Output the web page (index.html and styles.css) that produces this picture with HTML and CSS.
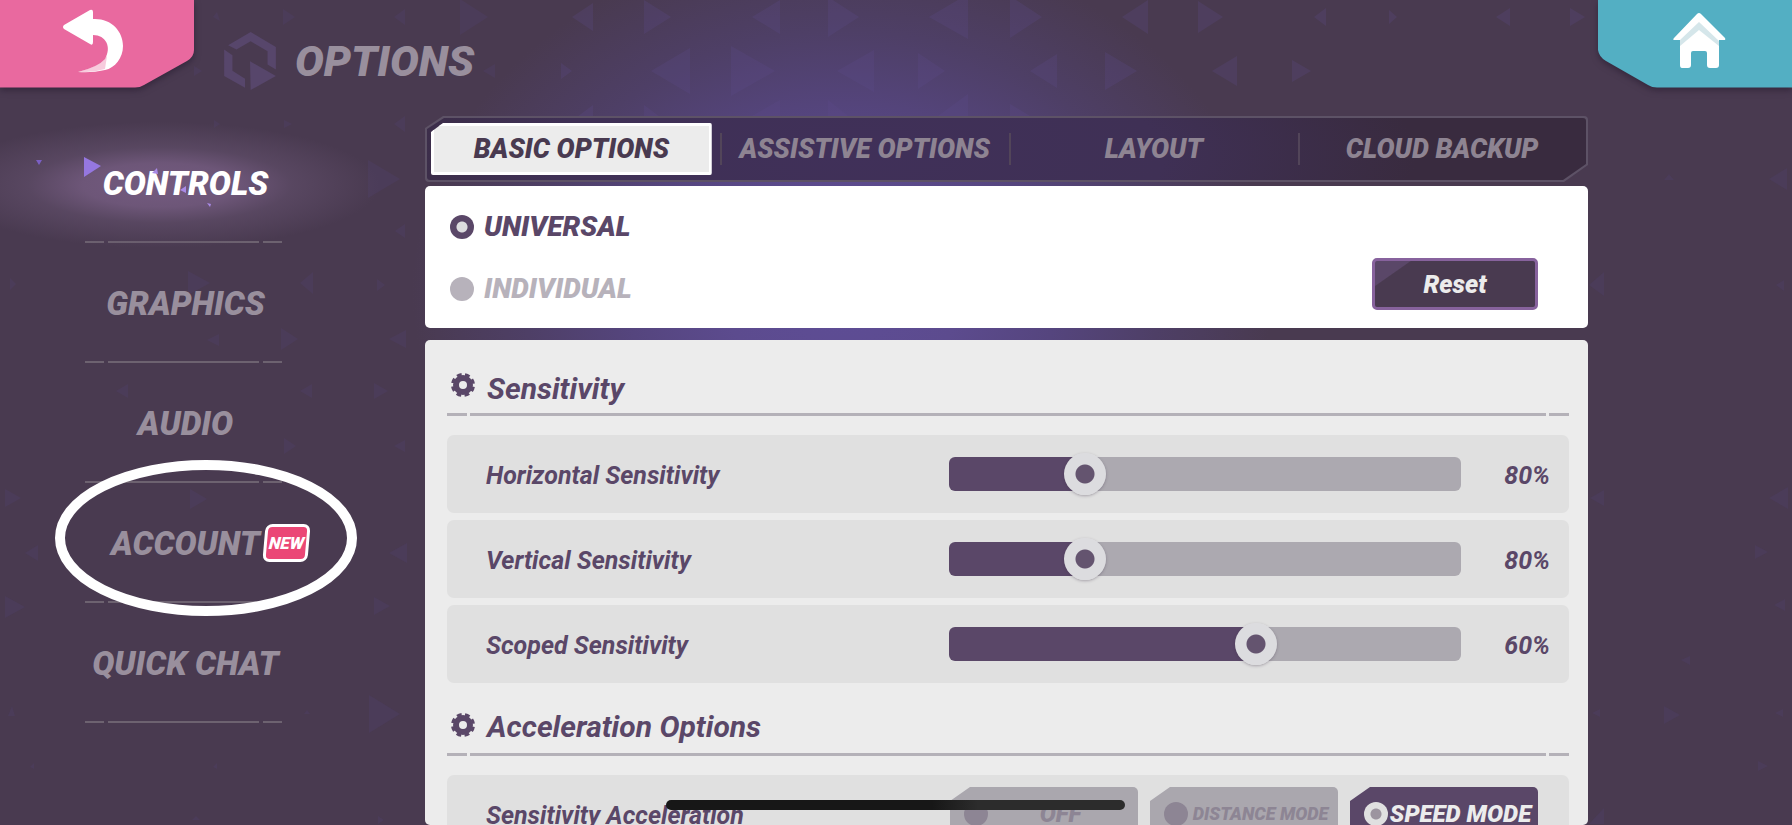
FILE: index.html
```html
<!DOCTYPE html>
<html lang="en">
<head>
<meta charset="utf-8">
<meta name="viewport" content="width=device-width, initial-scale=1">
<title>Options</title>
<link rel="stylesheet" href="styles.css">
</head>
<body>
<svg class="pattern" viewBox="0 0 1792 825" preserveAspectRatio="xMidYMid slice" aria-hidden="true">
  <g class="pattern-bright">
    <path d="M593 3v28l-21-14zM644 0v34l27-17zM780 0v34l-28-17zM828 -3v40l31-20zM968 -6v45l-39-22zM1010 -4v42l32-21zM1148 0v34l-26-17zM1198 1v32l25-16zM1326 8v18l-12-9zM1389 10v14l8-7zM1510 8v18l-14-9zM1570 8v18l15-9z"/>
    <path d="M561 63v16l11-8zM690 48v46l-39-23zM731 46v50l44-25zM874 50v42l-37-21zM918 53v36l27-18zM1057 54v34l-27-17zM1105 52v38l32-19zM1237 56v30l-25-15zM1292 60v22l19-11zM1656 62v18l-26-9z"/>
    <path d="M593 105v12h-16zM644 105v12h16zM780 100v16h-28zM828 100v16h20zM968 94v22h-30zM1010 104v12h20z"/>
  </g>
  <g class="pattern-dim">
    <path d="M283 9v16l12-8zM405 9v16l-11-8zM460 -1v36l28-18zM213 17l4-5 3 9zM405 116v16l-11-8zM284 120v8l8-4zM214 120v8l6-4zM194 66v10l8-5zM495 64v14l-12-7z"/>
    <path d="M368 160v38l32-19zM405 224v14l-10-7zM188 271v24l22-12zM313 272v22l-13-11zM377 279v12l8-6zM10 278v12l6-6zM219 334v12l-12-6zM281 328v22l17-11zM406 330v18l-17-9zM128 384v14l-12-7zM312 384v14l-12-7zM374 383v16l14-8z"/>
    <path d="M284 438v16l12-8zM405 440v12l-11-6zM5 489v18l16-9zM190 489v20l17-10zM38 545v16l-13-8zM407 543v20l-18-10zM5 596v22l20-11zM374 597v18l16-9zM369 695v38l31-19zM8 716l4-10 3 10zM304 714h6l-3-4zM30 767l4-4v6zM213 767l4-4v6zM192 820l4-4 4 4zM378 816v8l6-4z"/>
    <path d="M1787 168v22l-18-11zM1664 180l5-6 5 6zM1604 272v24l-15-11zM1784 280v11l-8-6zM1604 490v16l-14-8zM1788 487v22l-19-11zM1755 545v14l13-7zM1785 599v12l-11-6zM1690 656v9l-9-5zM1664 706v18l16-9zM1600 709v8l-8-4zM1783 709v8l-8-4zM1758 761v10l10-5zM1604 808v16h-15z"/>
  </g>
</svg>

<div class="screen">
  <header class="topbar">
    <button class="corner" type="button" aria-label="Back">
      <svg viewBox="0 0 194 88" width="194" height="88" aria-hidden="true">
        <path fill="#e9699f" d="M0 0H194V50Q194 57 187 61L144 85Q140 87.500 135 87.500H0Z"/>
        <path fill="#fff" d="M64 25L90 10Q93 9 93 12V19C111 18 123 31 123 46C123 58 115 68 105 70Q92 73 78 72Q98 67 105 59C112 47 106 35 93 35V42Q93 46 90 44L64 29Q62 27 64 25Z"/>
        <path fill="#e9699f" opacity=".35" d="M78 72Q98 67 107 56L105 69Q92 73 78 72Z"/>
      </svg>
    </button>
    <div class="brand">
      <svg class="brand-mark" viewBox="672 95 156 175" width="52" height="58" aria-hidden="true">
        <path d="M684 135L752 95L828 140V208L803 193V153L752 123L709 148ZM672 148L697 165V212L735 236V263L672 228ZM750 183L828 228L752 270Z"/>
      </svg>
      <h1>OPTIONS</h1>
    </div>
    <button class="corner" type="button" aria-label="Home">
      <svg viewBox="0 0 194 88" width="194" height="88" aria-hidden="true">
        <path fill="#53afc3" d="M0 0V50Q1 57 8 61L50 85Q54 87.500 59 87.500H194V0Z"/>
        <path fill="#fff" d="M99 14Q101 12 103 14L127 38Q128 40 126 40H121V65Q121 68 118 68H112Q109 68 109 65V53Q109 51 107 51H95Q93 51 93 53V65Q93 68 90 68H84Q82 68 82 65V40H77Q74 40 76 38Z"/>
        <path fill="#d5e6ea" d="M82 40L101 22L121 41V46L101 30L82 46Z"/>
      </svg>
    </button>
  </header>

  <div class="content">
    <nav class="side" aria-label="Option groups">
      <ul>
        <li class="current"><a href="#controls" aria-current="page">CONTROLS</a>
          <svg class="sparks" viewBox="0 0 180 54" width="180" height="54" aria-hidden="true">
            <path fill="#9577e0" d="M48 2V22L65 11Z"/><path fill="#7b5fc4" d="M0 5H6L3 10Z"/><path fill="#a98ae6" d="M116 18L121 13L122 19ZM144 35L150 31V38ZM171 48L175 49L174 52Z"/>
          </svg>
        </li>
        <li><a href="#graphics">GRAPHICS</a></li>
        <li><a href="#audio">AUDIO</a></li>
        <li><a href="#account">ACCOUNT</a><span class="badge"><span>NEW</span></span>
          <svg class="ring" viewBox="0 0 304 156" width="304" height="156" aria-hidden="true"><ellipse cx="152" cy="78" rx="146" ry="73"/></svg>
        </li>
        <li><a href="#quick-chat">QUICK CHAT</a></li>
      </ul>
    </nav>

    <main>
      <div class="tabs-frame">
        <div class="tabs" role="tablist">
          <button type="button" role="tab" aria-selected="true">BASIC OPTIONS</button>
          <button type="button" role="tab" aria-selected="false">ASSISTIVE OPTIONS</button>
          <button type="button" role="tab" aria-selected="false">LAYOUT</button>
          <button type="button" role="tab" aria-selected="false">CLOUD BACKUP</button>
        </div>
      </div>

      <section class="scope">
        <div class="scope-list">
          <label><input type="radio" name="scope" checked>UNIVERSAL</label>
          <label><input type="radio" name="scope">INDIVIDUAL</label>
        </div>
        <button class="reset" type="button">Reset</button>
      </section>

      <section class="settings">
        <h2><svg class="gear" viewBox="0 0 26 26" width="26" height="26" aria-hidden="true"><circle class="gear-body" cx="13" cy="13" r="7"/><circle class="gear-teeth" cx="13" cy="13" r="10"/></svg>Sensitivity</h2>
        <div class="row">
          <label for="horizontal">Horizontal Sensitivity</label>
          <input id="horizontal" type="range" min="0" max="1000" value="244" style="--at:.244">
          <output for="horizontal">80%</output>
        </div>
        <div class="row">
          <label for="vertical">Vertical Sensitivity</label>
          <input id="vertical" type="range" min="0" max="1000" value="244" style="--at:.244">
          <output for="vertical">80%</output>
        </div>
        <div class="row">
          <label for="scoped">Scoped Sensitivity</label>
          <input id="scoped" type="range" min="0" max="1000" value="608" style="--at:.608">
          <output for="scoped">60%</output>
        </div>

        <h2><svg class="gear" viewBox="0 0 26 26" width="26" height="26" aria-hidden="true"><circle class="gear-body" cx="13" cy="13" r="7"/><circle class="gear-teeth" cx="13" cy="13" r="10"/></svg>Acceleration Options</h2>
        <div class="row" role="radiogroup" aria-labelledby="accel">
          <span class="row-name" id="accel">Sensitivity Acceleration</span>
          <div class="modes">
            <label><input type="radio" name="mode"><span>OFF</span></label>
            <label class="long"><input type="radio" name="mode"><span>DISTANCE MODE</span></label>
            <label><input type="radio" name="mode" checked><span>SPEED MODE</span></label>
          </div>
        </div>
      </section>
    </main>
  </div>
</div>
<div class="home-indicator"></div>
</body>
</html>
```
FILE: styles.css
```css
:root {
  --plum: #5a4768;
  --muted: #998f9d;
  --base: #493a50;
}

* { box-sizing: border-box; }

body {
  margin: 0;
  height: 100vh;
  overflow: hidden;
  background:
    radial-gradient(ellipse 430px 350px at 47% 290px, #5e4d97 0%, #5c4b8e 28%, #55457e 50%, #4e3f66 74%, rgba(73, 58, 80, 0) 100%),
    var(--base);
  color: var(--plum);
  font-family: Roboto, "Liberation Sans", sans-serif;
  font-style: italic;
  font-weight: 700;
}

button, input { font: inherit; color: inherit; }

button {
  border: 0;
  padding: 0;
  background: none;
  cursor: pointer;
}

a { color: inherit; text-decoration: none; }

.pattern {
  position: absolute;
  inset: 0;
  width: 100%;
  height: 100%;
}
.pattern-bright { fill: #5e4c8c; opacity: .24; }
.pattern-dim { fill: #54437a; opacity: .22; }

.screen {
  position: relative;
  height: 100%;
  display: flex;
  flex-direction: column;
}

.topbar {
  display: flex;
  align-items: flex-start;
}
.corner { height: 88px; filter: drop-shadow(0 3px 3px rgba(40, 28, 48, .6)); }
.corner svg { display: block; }
.brand {
  flex: 1;
  display: flex;
  align-items: center;
  gap: 19px;
  padding: 32px 0 0 30px;
}
.brand-mark { fill: #57466b; }
h1 {
  margin: 0;
  color: var(--muted);
  font-size: 43px;
  line-height: 56px;
  font-weight: 900;
}

.content {
  flex: 1;
  min-height: 0;
  display: grid;
  grid-template-columns: 425px 1fr 204px;
}

/* Side navigation */
.side { padding: 33px 0 0 85px; }
.side ul {
  list-style: none;
  margin: 0;
  padding: 0;
  width: 197px;
}
.side li {
  position: relative;
  height: 120px;
  padding-left: 4px;
  display: flex;
  align-items: center;
  justify-content: center;
  color: var(--muted);
  font-size: 33px;
  font-weight: 900;
  white-space: nowrap;
  background: linear-gradient(90deg, #6d6270 19px, transparent 19px 23px, #6d6270 23px 174px, transparent 174px 178px, #6d6270 178px) bottom / 100% 2px no-repeat;
}
.side a { position: relative; }
.side .current { color: #fff; }
.current::before {
  content: "";
  position: absolute;
  left: -145px;
  top: -1px;
  width: 440px;
  height: 126px;
  background: radial-gradient(closest-side, #745b80 0%, #6d5678 35%, rgba(92, 74, 101, .8) 60%, rgba(73, 58, 80, 0) 100%);
}
.sparks { position: absolute; left: -49px; top: 32px; }
.badge {
  position: absolute;
  left: 179px;
  top: 41px;
  width: 45px;
  height: 38px;
  border: 3px solid #fff;
  border-radius: 7px;
  background: #eb4776;
  transform: skewX(-5deg);
  color: #fff;
  font-size: 17px;
  line-height: 32px;
  text-align: center;
}
.badge span { display: block; }
.ring { position: absolute; left: -31px; top: -23px; pointer-events: none; }
.ring ellipse { fill: none; stroke: #fff; stroke-width: 10; }

/* Main column */
main {
  min-width: 0;
  min-height: 0;
  padding-top: 26px;
  display: flex;
  flex-direction: column;
}

.tabs-frame {
  flex: none;
  padding: 2px;
  background: #5d5266;
  border-radius: 4px;
  clip-path: polygon(18px 0, 100% 0, 100% 49px, calc(100% - 24px) 100%, 0 100%, 0 12px);
}
.tabs {
  display: grid;
  grid-template-columns: 289fr 290fr 289fr 288fr;
  padding: 5px 0 5px 4px;
  border-radius: 3px;
  background: radial-gradient(ellipse 560px 170px at 37% 60%, #403059 0%, #3f3055 55%, #392b3f 100%);
  clip-path: polygon(17px 0, 100% 0, 100% 46px, calc(100% - 23px) 100%, 0 100%, 0 11px);
}
.tabs button {
  height: 52px;
  color: #8e8492;
  font-size: 27px;
  font-weight: 900;
  white-space: nowrap;
  background: linear-gradient(#524559, #524559) left center / 2px 32px no-repeat;
}
.tabs [aria-selected="true"] {
  margin-right: 8px;
  color: #493a50;
  border: 3px solid #fff;
  border-radius: 2px;
  background: #ececec;
  clip-path: polygon(12px 0, 100% 0, 100% 100%, 0 100%, 0 9px);
}

.scope {
  flex: none;
  margin-top: 4px;
  padding: 23px 50px 18px 25px;
  display: flex;
  justify-content: space-between;
  align-items: flex-end;
  background: #fff;
  border-radius: 5px;
}
.scope-list { display: grid; gap: 26px; padding-bottom: 3px; }
.scope label {
  display: flex;
  align-items: center;
  gap: 10px;
  color: #b7b2bb;
  font-size: 28px;
  line-height: 36px;
  font-weight: 900;
}
.scope label:has(:checked) { color: var(--plum); }

input[type="radio"] {
  appearance: none;
  flex: none;
  width: 24px;
  height: 24px;
  margin: 0;
  border-radius: 50%;
  background: currentColor;
}
.scope input:checked { background: radial-gradient(circle, #dcdcdf 5px, var(--plum) 6px); }

.reset {
  width: 166px;
  height: 52px;
  border: 3px solid #87629d;
  border-radius: 5px;
  background: linear-gradient(145deg, #5a4768 20px, #493a50 21px);
  color: #ececec;
  font-size: 25px;
  font-weight: 900;
}

.settings {
  flex: 1;
  min-height: 0;
  overflow: hidden;
  margin-top: 12px;
  padding: 30px 19px 0 22px;
  background: #ececec;
  border-radius: 5px;
}
h2 {
  display: flex;
  align-items: center;
  gap: 11px;
  margin: 0 0 19px;
  padding: 0 0 9px 3px;
  font-size: 30px;
  line-height: 37px;
  background: linear-gradient(90deg, #b4b1b8 20px, transparent 20px 23px, #b4b1b8 23px calc(100% - 23px), transparent calc(100% - 23px) calc(100% - 20px), #b4b1b8 calc(100% - 20px)) bottom / 100% 3px no-repeat;
}
.gear { margin-bottom: 7px; }
.gear circle { fill: none; stroke: var(--plum); }
.gear .gear-body { stroke-width: 6; }
.gear .gear-teeth {
  stroke-width: 4;
  stroke-dasharray: 4.6 3.254;
  stroke-dashoffset: -1.627;
}
.row + h2 { margin-top: 25px; padding-bottom: 11px; }
.row + h2 .gear { margin-bottom: 3px; }

.row {
  display: flex;
  align-items: center;
  height: 78px;
  padding: 0 19px 0 39px;
  border-radius: 7px;
  background: #e0e0e0;
  font-size: 25px;
  line-height: 32px;
}
.row + .row { margin-top: 7px; }
.row > label, .row-name { flex: 1; padding-top: 4px; }
output { width: 89px; padding-top: 4px; text-align: right; }

input[type="range"] {
  --edge: calc(21px + (100% - 42px) * var(--at));
  appearance: none;
  width: 512px;
  height: 34px;
  margin: 0;
  border-radius: 6px;
  background: linear-gradient(90deg, var(--plum) var(--edge), #aca9b0 var(--edge));
}
input[type="range"]::-webkit-slider-thumb {
  appearance: none;
  width: 42px;
  height: 42px;
  border-radius: 50%;
  background: radial-gradient(circle, #64546f 9px, #dcdcdf 10px);
  box-shadow: 0 1px 3px rgba(60, 50, 70, .35);
}

.modes {
  display: grid;
  grid-template-columns: repeat(3, 188px);
  gap: 12px;
  margin-right: 12px;
}
.modes label {
  display: flex;
  align-items: center;
  height: 54px;
  padding: 0 5px 0 14px;
  border-radius: 5px;
  background: #aaa7ae;
  color: #8d8594;
  font-size: 24px;
  font-weight: 900;
  clip-path: polygon(20px 0, 100% 0, 100% 100%, 0 100%, 0 14px);
}
.modes span { flex: 1; text-align: center; white-space: nowrap; }
.modes .long { font-size: 18px; }
.modes label:has(:checked) { background: var(--plum); color: #ececec; }
.modes input:checked { background: radial-gradient(circle, #9c949f 5px, #e0e0e0 6px); }

.home-indicator {
  position: fixed;
  left: calc(50% - 230px);
  bottom: 15px;
  width: 459px;
  height: 10px;
  border-radius: 5px;
  background: linear-gradient(90deg, #171717 58%, #2c2c2c 68%);
}
```
